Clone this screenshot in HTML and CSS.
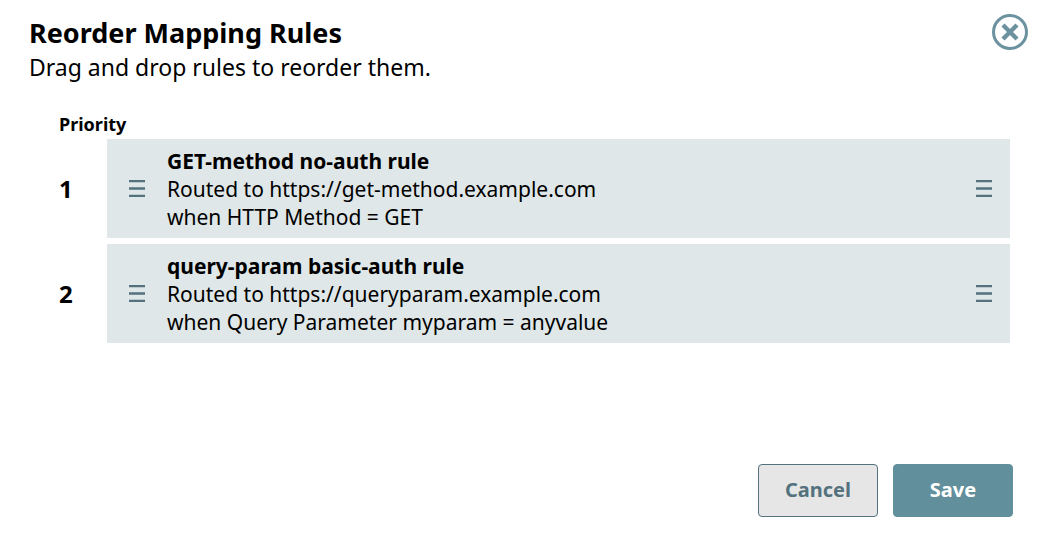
FILE: index.html
```html
<!DOCTYPE html>
<html lang="en">
<head>
<meta charset="utf-8">
<title>Reorder Mapping Rules</title>
<link rel="stylesheet" href="styles.css">
</head>
<body>
<main class="dialog" role="dialog" aria-labelledby="title">
  <header class="header">
    <div>
      <h1 class="title" id="title">Reorder Mapping Rules</h1>
      <p class="subtitle">Drag and drop rules to reorder them.</p>
    </div>
    <button class="close" type="button" aria-label="Close">
      <svg width="36" height="36" viewBox="0 0 36 36" fill="none" stroke="currentColor">
        <circle cx="18" cy="18" r="16.5" stroke-width="3"/>
        <path d="M11 11L25 25M25 11L11 25" stroke-width="4.4"/>
      </svg>
    </button>
  </header>
  <section class="rules">
    <h2 class="label">Priority</h2>
    <ol class="list">
      <li class="row">
        <span class="rank">1</span>
        <div class="card">
          <svg class="grip" width="16" height="18" viewBox="0 0 16 18"><path d="M0 0H16V2.3H0ZM0 7.3H16V9.7H0ZM0 14.7H16V17H0Z"/></svg>
          <div class="text">
            <h3 class="name">GET-method no-auth rule</h3>
            <p>Routed to https://get-method.example.com</p>
            <p>when HTTP Method = GET</p>
          </div>
          <svg class="grip" width="16" height="18" viewBox="0 0 16 18"><path d="M0 0H16V2.3H0ZM0 7.3H16V9.7H0ZM0 14.7H16V17H0Z"/></svg>
        </div>
      </li>
      <li class="row">
        <span class="rank">2</span>
        <div class="card">
          <svg class="grip" width="16" height="18" viewBox="0 0 16 18"><path d="M0 0H16V2.3H0ZM0 7.3H16V9.7H0ZM0 14.7H16V17H0Z"/></svg>
          <div class="text">
            <h3 class="name">query-param basic-auth rule</h3>
            <p>Routed to https://queryparam.example.com</p>
            <p>when Query Parameter myparam = anyvalue</p>
          </div>
          <svg class="grip" width="16" height="18" viewBox="0 0 16 18"><path d="M0 0H16V2.3H0ZM0 7.3H16V9.7H0ZM0 14.7H16V17H0Z"/></svg>
        </div>
      </li>
    </ol>
  </section>
  <footer class="footer">
    <button class="button cancel" type="button">Cancel</button>
    <button class="button save" type="button">Save</button>
  </footer>
</main>
</body>
</html>
```
FILE: styles.css
```css
* {
  box-sizing: border-box;
}

body {
  margin: 0;
  background: #fff;
  color: #000;
  font-family: "Noto Sans", sans-serif;
  font-size: 21px;
  line-height: 28px;
}

h1, h2, h3, p, ol {
  margin: 0;
  padding: 0;
}

.dialog {
  display: flex;
  flex-direction: column;
  min-height: 100vh;
  padding: 14px 29px 29px;
}

.header {
  display: flex;
  align-items: flex-start;
  justify-content: space-between;
  margin-right: -15px;
}

.title {
  padding-top: 2px;
  font-size: 27px;
  line-height: 34px;
}

.subtitle {
  font-size: 23px;
  line-height: 34px;
}

.close {
  display: flex;
  padding: 0;
  border: 0;
  background: none;
  color: #6b929e;
}

.rules {
  padding: 26px 3px 0 30px;
}

.label {
  padding-bottom: 1px;
  font-size: 18px;
  line-height: 28px;
}

.list {
  display: grid;
  gap: 6px;
  list-style: none;
}

.row {
  display: grid;
  grid-template-columns: 48px 1fr;
  align-items: center;
}

.rank {
  font-size: 24px;
  font-weight: 700;
}

.card {
  display: flex;
  align-items: center;
  gap: 22px;
  padding: 8px 18px 7px 22px;
  background: #dfe7e8;
}

.text {
  flex: 1;
}

.name {
  font-size: 21px;
  line-height: 28px;
}

.grip {
  fill: #53727e;
}

.footer {
  display: flex;
  justify-content: flex-end;
  gap: 15px;
  margin-top: auto;
}

.button {
  width: 120px;
  height: 53px;
  padding: 0 0 2px;
  border: 1px solid #618f9c;
  border-radius: 4px;
  font: 700 20px "Noto Sans", sans-serif;
}

.cancel {
  border-color: #53727e;
  background: #e6e6e6;
  color: #53727e;
}

.save {
  background: #618f9c;
  color: #fff;
}
```
